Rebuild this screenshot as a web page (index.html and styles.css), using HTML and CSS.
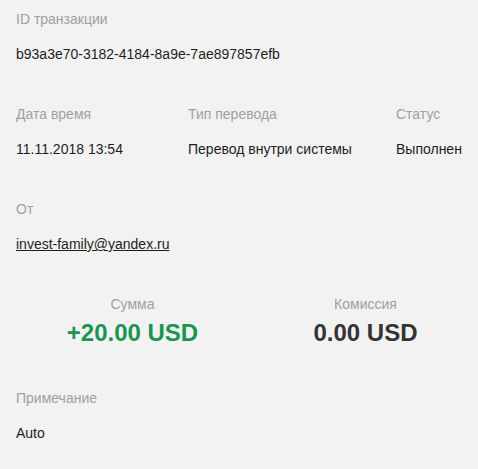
FILE: index.html
```html
<!DOCTYPE html>
<html lang="ru">

<head>
  <meta charset="UTF-8">
  <title>Транзакция</title>
  <link rel="stylesheet" href="styles.css">
</head>

<body>
<div class="details">
  <div class="field">
    <div class="label">ID транзакции</div>
    <div class="value">b93a3e70-3182-4184-8a9e-7ae897857efb</div>
  </div>

  <div class="row">
    <div class="field">
      <div class="label">Дата время</div>
      <div class="value">11.11.2018 13:54</div>
    </div>
    <div class="field">
      <div class="label">Тип перевода</div>
      <div class="value">Перевод внутри системы</div>
    </div>
    <div class="field">
      <div class="label">Статус</div>
      <div class="value">Выполнен</div>
    </div>
  </div>

  <div class="field">
    <div class="label">От</div>
    <div class="value"><a href="#">invest-family@yandex.ru</a></div>
  </div>

  <div class="summary">
    <div class="sum">
      <div class="label">Сумма</div>
      <div class="amount plus">+20.00 USD</div>
    </div>
    <div class="sum">
      <div class="label">Комиссия</div>
      <div class="amount">0.00 USD</div>
    </div>
  </div>

  <div class="field">
    <div class="label">Примечание</div>
    <div class="value">Auto</div>
  </div>
</div>
</body>

</html>
```

FILE: styles.css
```css
* {
  padding: 0;
  margin: 0;
  font-family: "Liberation Sans", Arial, sans-serif;
  font-size: 14px;
}

html,
body {
  overflow-x: hidden;
}

body {
  background-color: #f2f2f2;
  color: #1e1e1e;
}

.details {
  padding: 9px 0 0 16px;
}

.field {
  margin-bottom: 40px;
}

.label {
  line-height: 20px;
  color: #a0a0a0;
  margin-bottom: 15px;
}

.value {
  line-height: 20px;
}

.value a {
  color: #1e1e1e;
}

.row {
  display: grid;
  grid-template-columns: 172px 208px auto;
}

.summary {
  display: grid;
  grid-template-columns: 233px 233px;
  margin-bottom: 40px;
}

.sum {
  text-align: center;
}

.sum .label {
  margin-bottom: 4px;
}

.amount {
  font-size: 24px;
  font-weight: bold;
  line-height: 30px;
  color: #333;
}

.amount.plus {
  color: #1a9550;
}
```
